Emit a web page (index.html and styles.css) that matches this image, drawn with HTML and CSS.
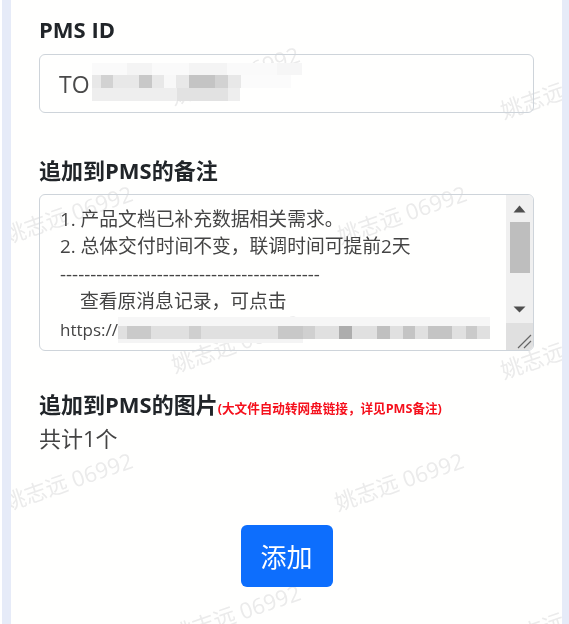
FILE: index.html
```html
<!DOCTYPE html>
<html lang="zh-CN">
<head>
<meta charset="utf-8">
<title>添加到PMS</title>
<link rel="stylesheet" href="styles.css">
</head>
<body>
<main class="card">
  <span class="wm wm1">姚志远 06992</span>
  <span class="wm wm2">姚志远 06992</span>
  <span class="wm wm3">姚志远 06992</span>
  <span class="wm wm4">姚志远 06992</span>
  <span class="wm wm5">姚志远 06992</span>
  <span class="wm wm6">姚志远 06992</span>
  <span class="wm wm7">姚志远 06992</span>
  <span class="wm wm8">姚志远 06992</span>
  <span class="wm wm9">姚志远 06992</span>
  <span class="wm wm10">姚志远 06992</span>

  <section class="field field-id">
    <label class="label">PMS ID</label>
    <div class="input">
      <span>TO</span>
      <svg class="mosaic mosaic-id" width="210" height="38" viewBox="0 0 210 38">
        <rect x="0" y="0" width="210" height="12" fill="#fafafa"/>
        <rect x="0" y="12" width="149" height="13" fill="#e8e8e8"/>
        <rect x="149" y="12" width="50" height="13" fill="#fbfbfb"/>
        <rect x="0" y="25" width="148" height="13" fill="#eeeeee"/>
        <rect x="35" y="0" width="25" height="12" fill="#f4f4f4"/>
        <rect x="97" y="0" width="38" height="12" fill="#f4f4f4"/>
        <rect x="185" y="0" width="25" height="12" fill="#f6f6f6"/>
        <rect x="9" y="12" width="12" height="13" fill="#d2d2d2"/>
        <rect x="47" y="12" width="13" height="13" fill="#c8c8c8"/>
        <rect x="72" y="12" width="12" height="13" fill="#f8f8f8"/>
        <rect x="97" y="12" width="26" height="13" fill="#c4c4c4"/>
        <rect x="123" y="12" width="13" height="13" fill="#d2d2d2"/>
        <rect x="85" y="25" width="51" height="13" fill="#e2e2e2"/>
      </svg>
    </div>
  </section>

  <section class="field field-note">
    <label class="label">追加到PMS的备注</label>
    <div class="textarea">
      <div class="text">
        <p>1. 产品文档已补充数据相关需求。</p>
        <p>2. 总体交付时间不变，联调时间可提前2天</p>
        <p>-------------------------------------------</p>
        <p class="indent">查看原消息记录，可点击</p>
        <p class="link">https://</p>
        <svg class="mosaic mosaic-url" width="372" height="26" viewBox="0 0 372 26">
          <rect x="0" y="0" width="372" height="9" fill="#f6f6f6"/>
          <rect x="0" y="9" width="372" height="13" fill="#e0e0e0"/>
          <rect x="0" y="22" width="185" height="4" fill="#f4f4f4"/>
          <rect x="9" y="9" width="24" height="13" fill="#cacaca"/>
          <rect x="71" y="9" width="12" height="13" fill="#cfcfcf"/>
          <rect x="160" y="9" width="25" height="13" fill="#c8c8c8"/>
          <rect x="185" y="9" width="12" height="13" fill="#d0d0d0"/>
          <rect x="221" y="9" width="13" height="13" fill="#adadad"/>
          <rect x="259" y="9" width="13" height="13" fill="#c0c0c0"/>
          <rect x="285" y="9" width="12" height="13" fill="#c4c4c4"/>
          <rect x="310" y="9" width="24" height="13" fill="#c4c4c4"/>
          <rect x="348" y="9" width="11" height="13" fill="#cacaca"/>
        </svg>
      </div>
      <div class="scroll">
        <div class="track">
          <svg class="arrow" width="13" height="8" viewBox="0 0 13 8"><path d="M6.5 0.5 L12.5 7.5 H0.5 Z" fill="#4f4f4f"/></svg>
          <div class="thumb"></div>
          <svg class="arrow arrow-down" width="13" height="7" viewBox="0 0 13 7"><path d="M0.5 0.5 H12.5 L6.5 6.5 Z" fill="#4f4f4f"/></svg>
        </div>
        <div class="corner">
          <svg width="15" height="15" viewBox="0 0 15 15"><path d="M1 14 L14 1 M7 14 L14 7" stroke="#666" stroke-width="1.2" fill="none"/></svg>
        </div>
      </div>
    </div>
  </section>

  <section class="field field-pic">
    <h2 class="label pic-label">追加到PMS的图片<small class="hint">(大文件自动转网盘链接，详见PMS备注)</small></h2>
    <p class="count">共计1个</p>
  </section>

  <div class="actions"><button class="btn" type="button">添加</button></div>
</main>
</body>
</html>
```
FILE: styles.css
```css
* { box-sizing: border-box; }
html, body { margin: 0; height: 624px; overflow: hidden; }
body {
  background: #e6ebf8;
  padding: 0 7px 0 11px;
  font-family: "Open Sans", "Noto Sans CJK SC", sans-serif;
  color: #24292e;
  position: relative;
}
body::before {
  content: "";
  position: absolute;
  left: 0; top: 0; bottom: 0;
  width: 2px;
  background: #fff;
}
.card {
  position: relative;
  height: 624px;
  background: #fffffe;
  padding: 0 28px;
  overflow: hidden;
  filter: blur(0.4px);
}
.wm {
  position: absolute;
  font-size: 22px;
  line-height: 24px;
  color: #ebebeb;
  white-space: nowrap;
  transform: rotate(-19deg);
  transform-origin: left bottom;
}
.wm1 { left: 164px; top: 84px; }
.wm2 { left: 494px; top: 98px; }
.wm3 { left: -3px; top: 223px; }
.wm4 { left: 331px; top: 223px; }
.wm5 { left: 165px; top: 352px; }
.wm6 { left: 494px; top: 358px; }
.wm7 { left: -3px; top: 490px; }
.wm8 { left: 328px; top: 490px; }
.wm9 { left: 165px; top: 622px; }
.wm10 { left: 494px; top: 628px; }

.field { position: relative; }
.field-id { padding-top: 16px; }
.field-note { margin-top: 44px; }
.field-pic { margin-top: 40px; }
.label {
  display: block;
  margin: 0;
  font-size: 22px;
  line-height: 26px;
  font-weight: 700;
  color: #212529;
}
.input {
  position: relative;
  margin-top: 12px;
  height: 59px;
  width: 495px;
  border: 1px solid #ced4da;
  border-radius: 6px;
  padding: 0 19px;
  display: flex;
  align-items: center;
  font-size: 23px;
  color: #4a4a4a;
}
.mosaic { position: absolute; }
.mosaic-id { left: 52px; top: 8px; }
.textarea {
  margin-top: 11px;
  height: 157px;
  width: 495px;
  border: 1px solid #ced4da;
  border-radius: 6px;
  display: flex;
  overflow: hidden;
}
.text {
  position: relative;
  flex: 1;
  padding: 11px 0 0 20px;
  font-size: 18.8px;
  line-height: 27.4px;
  color: #444;
  overflow: hidden;
}
.text p { margin: 0; white-space: nowrap; }
.text .link { font-size: 17px; }
.indent { padding-left: 20px; }
.mosaic-url { left: 78px; top: 122px; }
.scroll {
  width: 27px;
  display: flex;
  flex-direction: column;
  background: #f0f0f0;
}
.track {
  flex: 1;
  display: flex;
  flex-direction: column;
  align-items: center;
  padding: 10px 0 10px;
}
.thumb {
  width: 20px;
  height: 51px;
  margin-top: 9px;
  background: #bebebe;
}
.arrow { flex: none; }
.arrow-down { margin-top: auto; }
.corner {
  height: 27px;
  background: #e0e0e0;
  display: flex;
  align-items: flex-end;
  justify-content: flex-end;
  padding: 0 1px 1px 0;
}
.pic-label { white-space: nowrap; height: 26px; }
.hint {
  font-size: 12.6px;
  font-weight: 700;
  color: #f5101c;
}
.count {
  margin: 8px 0 0;
  font-size: 22px;
  line-height: 26px;
  color: #444;
}
.actions {
  position: relative;
  display: flex;
  justify-content: center;
  margin-top: 74px;
}
.btn {
  width: 92px;
  height: 62px;
  border: 0;
  border-radius: 6px;
  background: #0d6efd;
  color: #fff;
  font-family: inherit;
  font-size: 26px;
}
```
